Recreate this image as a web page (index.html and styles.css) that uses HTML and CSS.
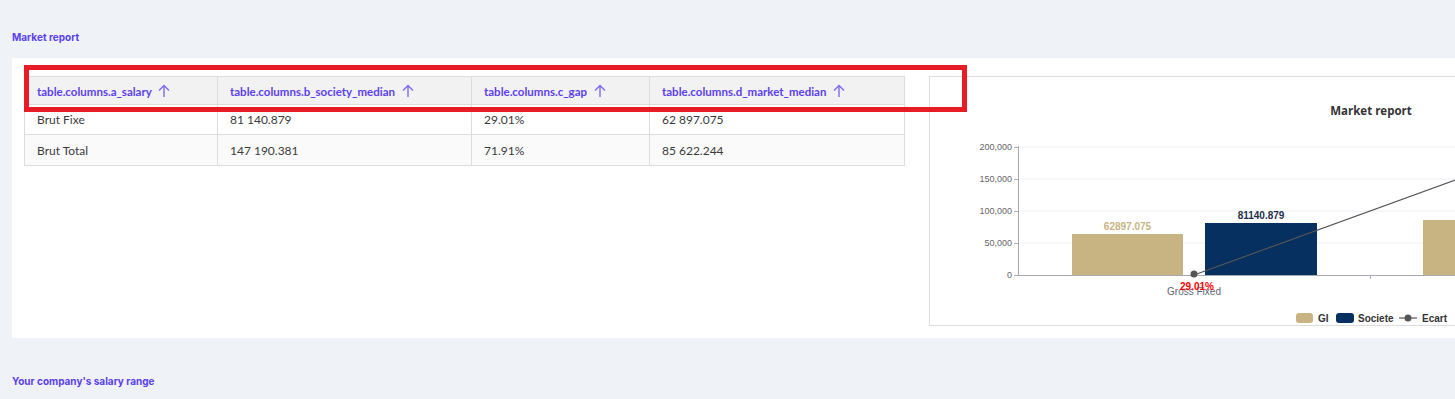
FILE: index.html
```html
<!DOCTYPE html>
<html lang="en">
<head>
    <meta charset="UTF-8">
    <meta name="viewport" content="width=device-width, initial-scale=1.0">
    <title>Market report</title>
    <link rel="stylesheet" href="styles.css">
</head>
<body>
    <div class="page">
        <h3 class="section-title">Market report</h3>
        <div class="panel">
            <div class="highlight"></div>
            <table class="report">
                <thead>
                    <tr>
                        <th class="col-a">table.columns.a_salary <svg class="sort" viewBox="0 0 12 14"><path d="M6 13V1.5M1 6.5L6 1.5L11 6.5"/></svg></th>
                        <th class="col-b">table.columns.b_society_median <svg class="sort" viewBox="0 0 12 14"><path d="M6 13V1.5M1 6.5L6 1.5L11 6.5"/></svg></th>
                        <th class="col-c">table.columns.c_gap <svg class="sort" viewBox="0 0 12 14"><path d="M6 13V1.5M1 6.5L6 1.5L11 6.5"/></svg></th>
                        <th class="col-d">table.columns.d_market_median <svg class="sort" viewBox="0 0 12 14"><path d="M6 13V1.5M1 6.5L6 1.5L11 6.5"/></svg></th>
                    </tr>
                </thead>
                <tbody>
                    <tr>
                        <td>Brut Fixe</td>
                        <td>81 140.879</td>
                        <td>29.01%</td>
                        <td>62 897.075</td>
                    </tr>
                    <tr>
                        <td>Brut Total</td>
                        <td>147 190.381</td>
                        <td>71.91%</td>
                        <td>85 622.244</td>
                    </tr>
                </tbody>
            </table>

            <div class="chart">
                <svg width="880" height="248" viewBox="0 0 880 248">
                    <text class="chart-title" x="441" y="38" text-anchor="middle">Market report</text>

                    <!-- grid -->
                    <g class="grid">
                        <line x1="88" y1="70" x2="880" y2="70"/>
                        <line x1="88" y1="102" x2="880" y2="102"/>
                        <line x1="88" y1="134" x2="880" y2="134"/>
                        <line x1="88" y1="166" x2="880" y2="166"/>
                    </g>
                    <g class="axis">
                        <line x1="88.5" y1="69" x2="88.5" y2="198"/>
                        <line x1="84" y1="198.5" x2="880" y2="198.5"/>
                        <line x1="84" y1="70.5" x2="88" y2="70.5"/>
                        <line x1="84" y1="102.5" x2="88" y2="102.5"/>
                        <line x1="84" y1="134.5" x2="88" y2="134.5"/>
                        <line x1="84" y1="166.5" x2="88" y2="166.5"/>
                        <line x1="440.5" y1="198" x2="440.5" y2="202"/>
                    </g>
                    <g class="ylabels" text-anchor="end">
                        <text x="82" y="73">200,000</text>
                        <text x="82" y="105">150,000</text>
                        <text x="82" y="137">100,000</text>
                        <text x="82" y="169">50,000</text>
                        <text x="82" y="201">0</text>
                    </g>

                    <!-- bars -->
                    <rect class="bar-gi" x="142" y="157" width="111" height="41"/>
                    <rect class="bar-soc" x="275" y="146" width="112" height="52"/>
                    <rect class="bar-gi" x="493" y="143" width="111" height="55"/>

                    <text class="val-gi" x="197.5" y="153" text-anchor="middle">62897.075</text>
                    <text class="val-soc" x="331" y="142" text-anchor="middle">81140.879</text>

                    <!-- gap line -->
                    <line class="ecart" x1="264" y1="198" x2="616" y2="70"/>
                    <circle class="ecart-dot" cx="264" cy="197" r="3.5"/>

                    <text class="xlabel" x="264" y="218" text-anchor="middle">Gross Fixed</text>
                    <text class="pct" x="267" y="213" text-anchor="middle">29.01%</text>

                    <!-- legend -->
                    <g class="legend">
                        <rect class="bar-gi" x="366" y="236" width="17" height="10" rx="3"/>
                        <text x="388" y="245">GI</text>
                        <rect class="bar-soc" x="406" y="236" width="18" height="10" rx="3"/>
                        <text x="428" y="245">Societe</text>
                        <line class="ecart" x1="469" y1="241" x2="487" y2="241"/>
                        <circle class="ecart-dot" cx="478" cy="241" r="3.5"/>
                        <text x="492" y="245">Ecart</text>
                    </g>
                </svg>
            </div>
        </div>

        <h3 class="section-title next">Your company's salary range</h3>
    </div>
</body>
</html>
```

FILE: styles.css
```css
body {
    margin: 0;
    padding: 0;
    background-color: #eff2f7;
    font-family: Lato, "Open Sans", sans-serif;
    overflow: hidden;
}

.page {
    padding: 30px 0 0 12px;
    overflow: hidden;
}

.section-title {
    margin: 0 0 14px 0;
    font-family: Inter, Lato, sans-serif;
    font-size: 10px;
    line-height: 14px;
    font-weight: 700;
    color: #5b3ff0;
}

.section-title.next {
    margin-top: 36px;
}

.panel {
    position: relative;
    display: flex;
    gap: 24px;
    width: max-content;
    background-color: #fff;
    padding: 18px 12px 12px 12px;
}

.highlight {
    position: absolute;
    left: 12px;
    top: 7px;
    width: 943px;
    height: 47px;
    box-sizing: border-box;
    border: 5px solid #e81c24;
    pointer-events: none;
}

/* table */

.report {
    width: 881px;
    align-self: flex-start;
    border-collapse: collapse;
    font-size: 12px;
    color: #3a3a3a;
}

.report th, .report td {
    border: 1px solid #ddd;
    text-align: left;
    padding: 0 12px;
}

.report th {
    height: 27px;
    background-color: #f2f2f2;
    color: #5b3ff0;
    font-size: 11.5px;
    font-weight: 700;
    white-space: nowrap;
}

.report td {
    height: 29px;
}

.report tbody tr:nth-child(2) td {
    background-color: #fafafa;
    height: 30px;
}

.col-a { width: 168px; }
.col-b { width: 229px; }
.col-c { width: 153px; }

.sort {
    width: 12px;
    height: 14px;
    margin-left: 4px;
    vertical-align: -2px;
    fill: none;
    stroke: #7d6cf2;
    stroke-width: 1.4;
}

/* chart */

.chart {
    width: 880px;
    height: 248px;
    border: 1px solid #ddd;
    font-family: "Liberation Sans", Arial, sans-serif;
}

.chart svg {
    display: block;
}

.chart-title {
    font-family: "Open Sans", sans-serif;
    font-size: 11.5px;
    font-weight: 700;
    fill: #333;
}

.grid line {
    stroke: #eef0f6;
    stroke-width: 1;
}

.axis line {
    stroke: #a8a8b0;
    stroke-width: 1;
}

.ylabels text {
    font-size: 9px;
    fill: #666;
}

.bar-gi {
    fill: #c8b383;
}

.bar-soc {
    fill: #06305f;
}

.val-gi {
    font-size: 10px;
    font-weight: 700;
    fill: #c8b383;
}

.val-soc {
    font-size: 10px;
    font-weight: 700;
    fill: #1c2f4a;
}

.ecart {
    stroke: #555;
    stroke-width: 1.2;
}

.ecart-dot {
    fill: #555;
}

.xlabel {
    font-size: 10px;
    fill: #5f667a;
}

.pct {
    font-size: 10px;
    font-weight: 700;
    fill: #ff0000;
}

.legend text {
    font-size: 10px;
    font-weight: 700;
    fill: #333;
}
```
